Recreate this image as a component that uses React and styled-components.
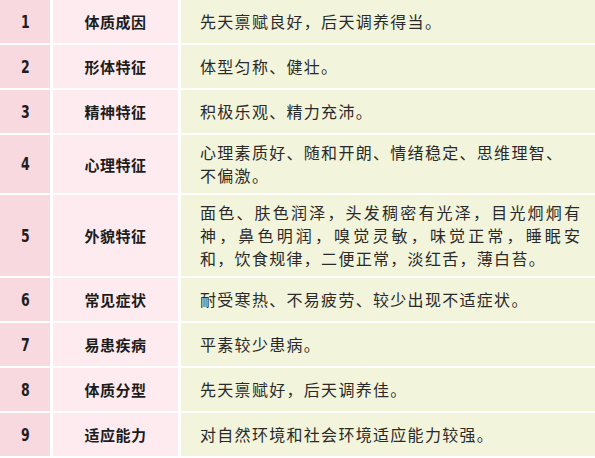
import React from 'react';
import styled, { createGlobalStyle } from 'styled-components';

const GlobalStyle = createGlobalStyle`
  html, body {
    margin: 0;
    padding: 0;
    background: #ffffff;
  }
  body {
    font-family: "Noto Sans CJK SC", "Noto Sans", sans-serif;
  }
`;

const Table = styled.div`
  display: grid;
  grid-template-columns: 50px 125px 1fr;
  column-gap: 3px;
  row-gap: 2px;
  width: 595px;
  background: #ffffff;
`;

const Cell = styled.div`
  display: flex;
  align-items: center;
  min-height: 43px;
  box-sizing: border-box;
  padding: 6px 0;
`;

const NumCell = styled(Cell)`
  justify-content: center;
  background: #f8d9df;
  color: #1e1e1e;
  font-family: "DejaVu Sans", "Liberation Sans", sans-serif;
  font-stretch: condensed;
  font-size: 17px;
  font-weight: 700;
  transform-origin: center;
  & > span {
    display: inline-block;
    transform: scaleX(0.82);
  }
`;

const LabelCell = styled(Cell)`
  justify-content: center;
  background: #fdebef;
  color: #1c1c1c;
  font-size: 15px;
  font-weight: 700;
  letter-spacing: 0.5px;
`;

const TextCell = styled(Cell)`
  background: #f2f5dc;
  padding-left: 19px;
  padding-right: 15px;
  color: #2a2a2a;
  font-size: 16px;
  letter-spacing: 1.3px;
`;

const Lines = styled.div`
  width: 100%;
  line-height: 23px;
`;

const Line = styled.span`
  display: block;
  white-space: nowrap;
  text-align: ${(p) => (p.$justify ? 'justify' : 'left')};
  text-align-last: ${(p) => (p.$justify ? 'justify' : 'auto')};
  letter-spacing: ${(p) => (p.$justify ? '0' : 'inherit')};
`;

const rows = [
  { label: '体质成因', lines: [['先天禀赋良好，后天调养得当。']] },
  { label: '形体特征', lines: [['体型匀称、健壮。']] },
  { label: '精神特征', lines: [['积极乐观、精力充沛。']] },
  { label: '心理特征', lines: [['心理素质好、随和开朗、情绪稳定、思维理智、'], ['不偏激。']] },
  {
    label: '外貌特征',
    lines: [
      ['面色、肤色润泽，头发稠密有光泽，目光炯炯有', true],
      ['神，鼻色明润，嗅觉灵敏，味觉正常，睡眠安', true],
      ['和，饮食规律，二便正常，淡红舌，薄白苔。'],
    ],
  },
  { label: '常见症状', lines: [['耐受寒热、不易疲劳、较少出现不适症状。']] },
  { label: '易患疾病', lines: [['平素较少患病。']] },
  { label: '体质分型', lines: [['先天禀赋好，后天调养佳。']] },
  { label: '适应能力', lines: [['对自然环境和社会环境适应能力较强。']] },
];

export default function App() {
  return (
    <>
      <GlobalStyle />
      <Table>
        {rows.map((row, i) => (
          <React.Fragment key={row.label}>
            <NumCell>
              <span>{i + 1}</span>
            </NumCell>
            <LabelCell>{row.label}</LabelCell>
            <TextCell>
              <Lines>
                {row.lines.map(([text, justify]) => (
                  <Line key={text} $justify={justify}>
                    {text}
                  </Line>
                ))}
              </Lines>
            </TextCell>
          </React.Fragment>
        ))}
      </Table>
    </>
  );
}
